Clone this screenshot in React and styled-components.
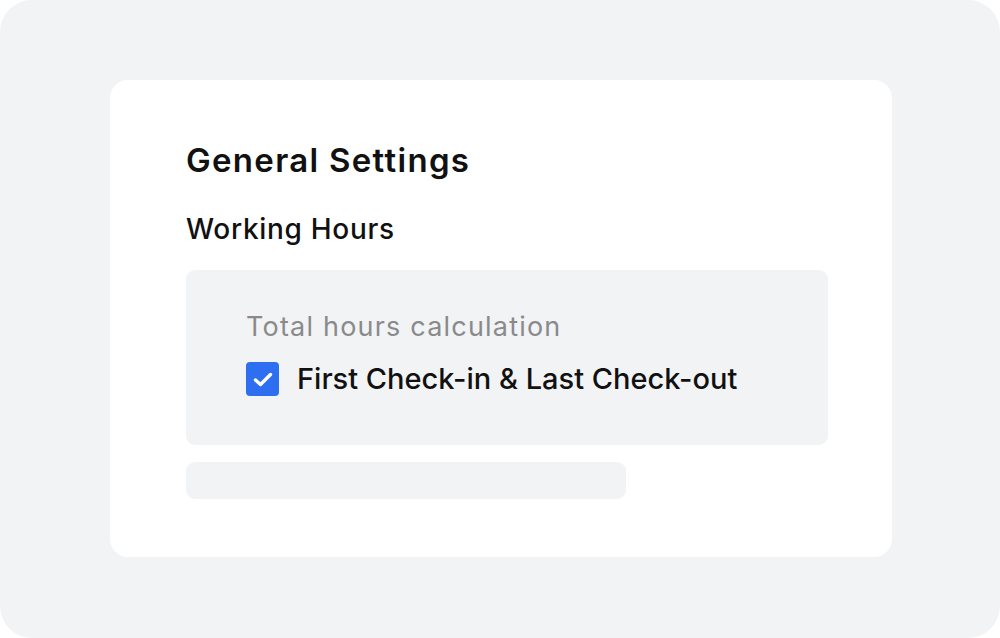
import React from "react";
import styled, { createGlobalStyle } from "styled-components";

const GlobalStyle = createGlobalStyle`
  html, body {
    margin: 0;
    padding: 0;
    background: #ffffff;
  }
  body {
    font-family: Inter, "Noto Sans", "Liberation Sans", sans-serif;
  }
`;

const Backdrop = styled.div`
  width: 1000px;
  height: 638px;
  box-sizing: border-box;
  background: #f2f3f5;
  border-radius: 32px;
  padding: 80px 108px 81px 110px;
`;

const Card = styled.div`
  height: 100%;
  box-sizing: border-box;
  background: #ffffff;
  border-radius: 18px;
  padding: 58px 64px 0 76px;
  display: flex;
  flex-direction: column;
`;

const Title = styled.h1`
  margin: 0;
  font-size: 33px;
  font-weight: 600;
  color: #111111;
  line-height: 44px;
  letter-spacing: 1.3px;
`;

const SubTitle = styled.h2`
  margin: 29px 0 0;
  font-size: 28px;
  font-weight: 500;
  color: #111111;
  line-height: 36px;
  letter-spacing: 0.7px;
`;

const Panel = styled.div`
  margin-top: 23px;
  height: 175px;
  box-sizing: border-box;
  background: #f2f3f5;
  border-radius: 9px;
  padding: 39px 60px 0;
  display: flex;
  flex-direction: column;
  gap: 14px;
`;

const Label = styled.div`
  font-size: 27px;
  color: #8a8a8c;
  line-height: 36px;
  letter-spacing: 1.2px;
`;

const OptionRow = styled.label`
  display: flex;
  align-items: center;
  gap: 18px;
  font-size: 29px;
  color: #111111;
  line-height: 40px;
  font-weight: 500;
`;

const Checkbox = styled.span`
  width: 33px;
  height: 34px;
  border-radius: 4px;
  background: #2e6ef0;
  display: flex;
  align-items: center;
  justify-content: center;
  flex-shrink: 0;
`;

const Placeholder = styled.div`
  margin-top: 17px;
  width: ${(p) => p.$width}px;
  height: 37px;
  background: #f2f3f5;
  border-radius: 9px;
`;

const App = () => {
  return (
    <>
      <GlobalStyle />
      <Backdrop>
        <Card>
          <Title>General Settings</Title>
          <SubTitle>Working Hours</SubTitle>
          <Panel>
            <Label>Total hours calculation</Label>
            <OptionRow>
              <Checkbox>
                <svg width="20" height="15" viewBox="0 0 20 15" fill="none">
                  <path
                    d="M2.5 8L7.5 12.5L17.5 2.5"
                    stroke="#ffffff"
                    strokeWidth="3.4"
                    strokeLinecap="round"
                    strokeLinejoin="round"
                  />
                </svg>
              </Checkbox>
              First Check-in &amp; Last Check-out
            </OptionRow>
          </Panel>
          <Placeholder $width={440} />
        </Card>
      </Backdrop>
    </>
  );
};

export default App;
